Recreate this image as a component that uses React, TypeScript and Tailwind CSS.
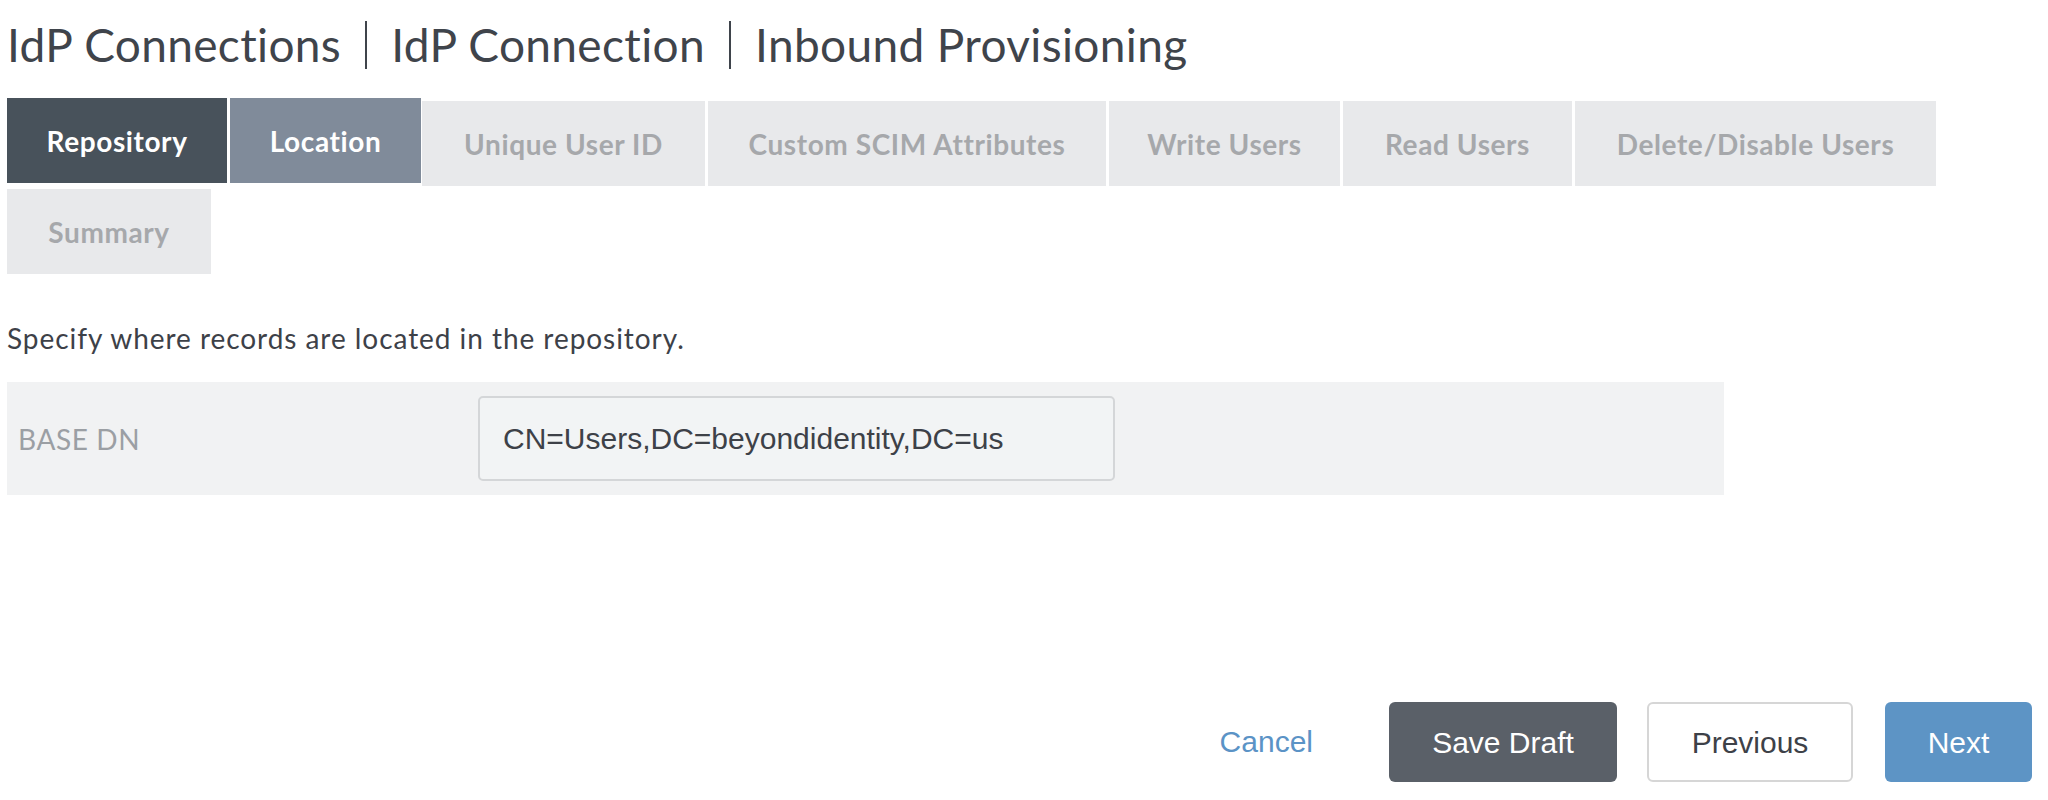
import React from "react";

type Tab = { label: string; w: string; state: "done" | "current" | "todo"; mr: string };

const tabs: Tab[] = [
  { label: "Repository", w: "w-[220px]", state: "done", mr: "mr-[3px]" },
  { label: "Location", w: "w-[191px]", state: "current", mr: "mr-[1px]" },
  { label: "Unique User ID", w: "w-[283px]", state: "todo", mr: "mr-[3px]" },
  { label: "Custom SCIM Attributes", w: "w-[398px]", state: "todo", mr: "mr-[3px]" },
  { label: "Write Users", w: "w-[231px]", state: "todo", mr: "mr-[3px]" },
  { label: "Read Users", w: "w-[229px]", state: "todo", mr: "mr-[3px]" },
  { label: "Delete/Disable Users", w: "w-[361px]", state: "todo", mr: "mr-[3px]" },
  { label: "Summary", w: "w-[204px]", state: "todo", mr: "mr-[3px]" },
];

function tabClass(t: Tab) {
  if (t.state === "done") return "bg-[#48525b] text-white";
  if (t.state === "current") return "bg-[#808b9a] text-white";
  return "bg-[#e8e9eb] text-[#a6a8ab] mt-[3px]";
}

export default function App() {
  return (
    <div className="h-[800px] w-[2048px] bg-white flex flex-col font-['Lato','Noto_Sans',sans-serif] text-[#3f444b] overflow-hidden">
      {/* Title breadcrumb */}
      <div className="pt-[17px] pl-[7px] flex items-center text-[46px] leading-[55px] tracking-[0.35px] text-[#3f444b]">
        <span>IdP Connections</span>
        <span className="mx-[24px] w-[2px] h-[48px] bg-[#3f444b] inline-block" />
        <span>IdP Connection</span>
        <span className="mx-[24px] w-[2px] h-[48px] bg-[#3f444b] inline-block" />
        <span>Inbound Provisioning</span>
      </div>

      {/* Wizard tabs */}
      <div className="mt-[26px] px-[7px] flex flex-wrap items-start">
        {tabs.map((t) => (
          <div
            key={t.label}
            className={`${t.w} ${t.mr} h-[85px] flex items-center justify-center text-[28px] tracking-[0.6px] font-bold whitespace-nowrap ${tabClass(t)}`}
          >
            {t.label}
          </div>
        ))}
      </div>

      {/* Description */}
      <p className="mt-[48px] pl-[7px] text-[28px] leading-[32px] tracking-[0.95px] text-[#3d4148]">
        Specify where records are located in the repository.
      </p>

      {/* Form row */}
      <div className="mt-[28px] ml-[7px] w-[1717px] h-[113px] bg-[#f1f2f3] flex items-center">
        <div className="w-[471px] pl-[11px] text-[28px] tracking-[0.6px] text-[#9b9fa4]">BASE DN</div>
        <div className="w-[637px] h-[85px] rounded-[5px] border-2 border-[#d4d6d8] bg-[#f2f4f5] flex items-center pl-[23px] font-['Liberation_Sans','Arial',sans-serif] text-[30px] text-[#3d4148]">
          CN=Users,DC=beyondidentity,DC=us
        </div>
      </div>

      {/* Footer buttons */}
      <div className="mt-auto pb-[18px] pr-[16px] flex justify-end items-center font-['Liberation_Sans','Arial',sans-serif] text-[30px]">
        <button className="mr-[76px] text-[#5b93c6] leading-[80px]">Cancel</button>
        <button className="mr-[30px] w-[228px] h-[80px] rounded-[6px] bg-[#5a6068] text-white">
          Save Draft
        </button>
        <button className="mr-[32px] w-[206px] h-[80px] rounded-[6px] border-2 border-[#d6d6d6] bg-white text-[#3d4148]">
          Previous
        </button>
        <button className="w-[147px] h-[80px] rounded-[6px] bg-[#5d94c5] text-white">
          Next
        </button>
      </div>
    </div>
  );
}
